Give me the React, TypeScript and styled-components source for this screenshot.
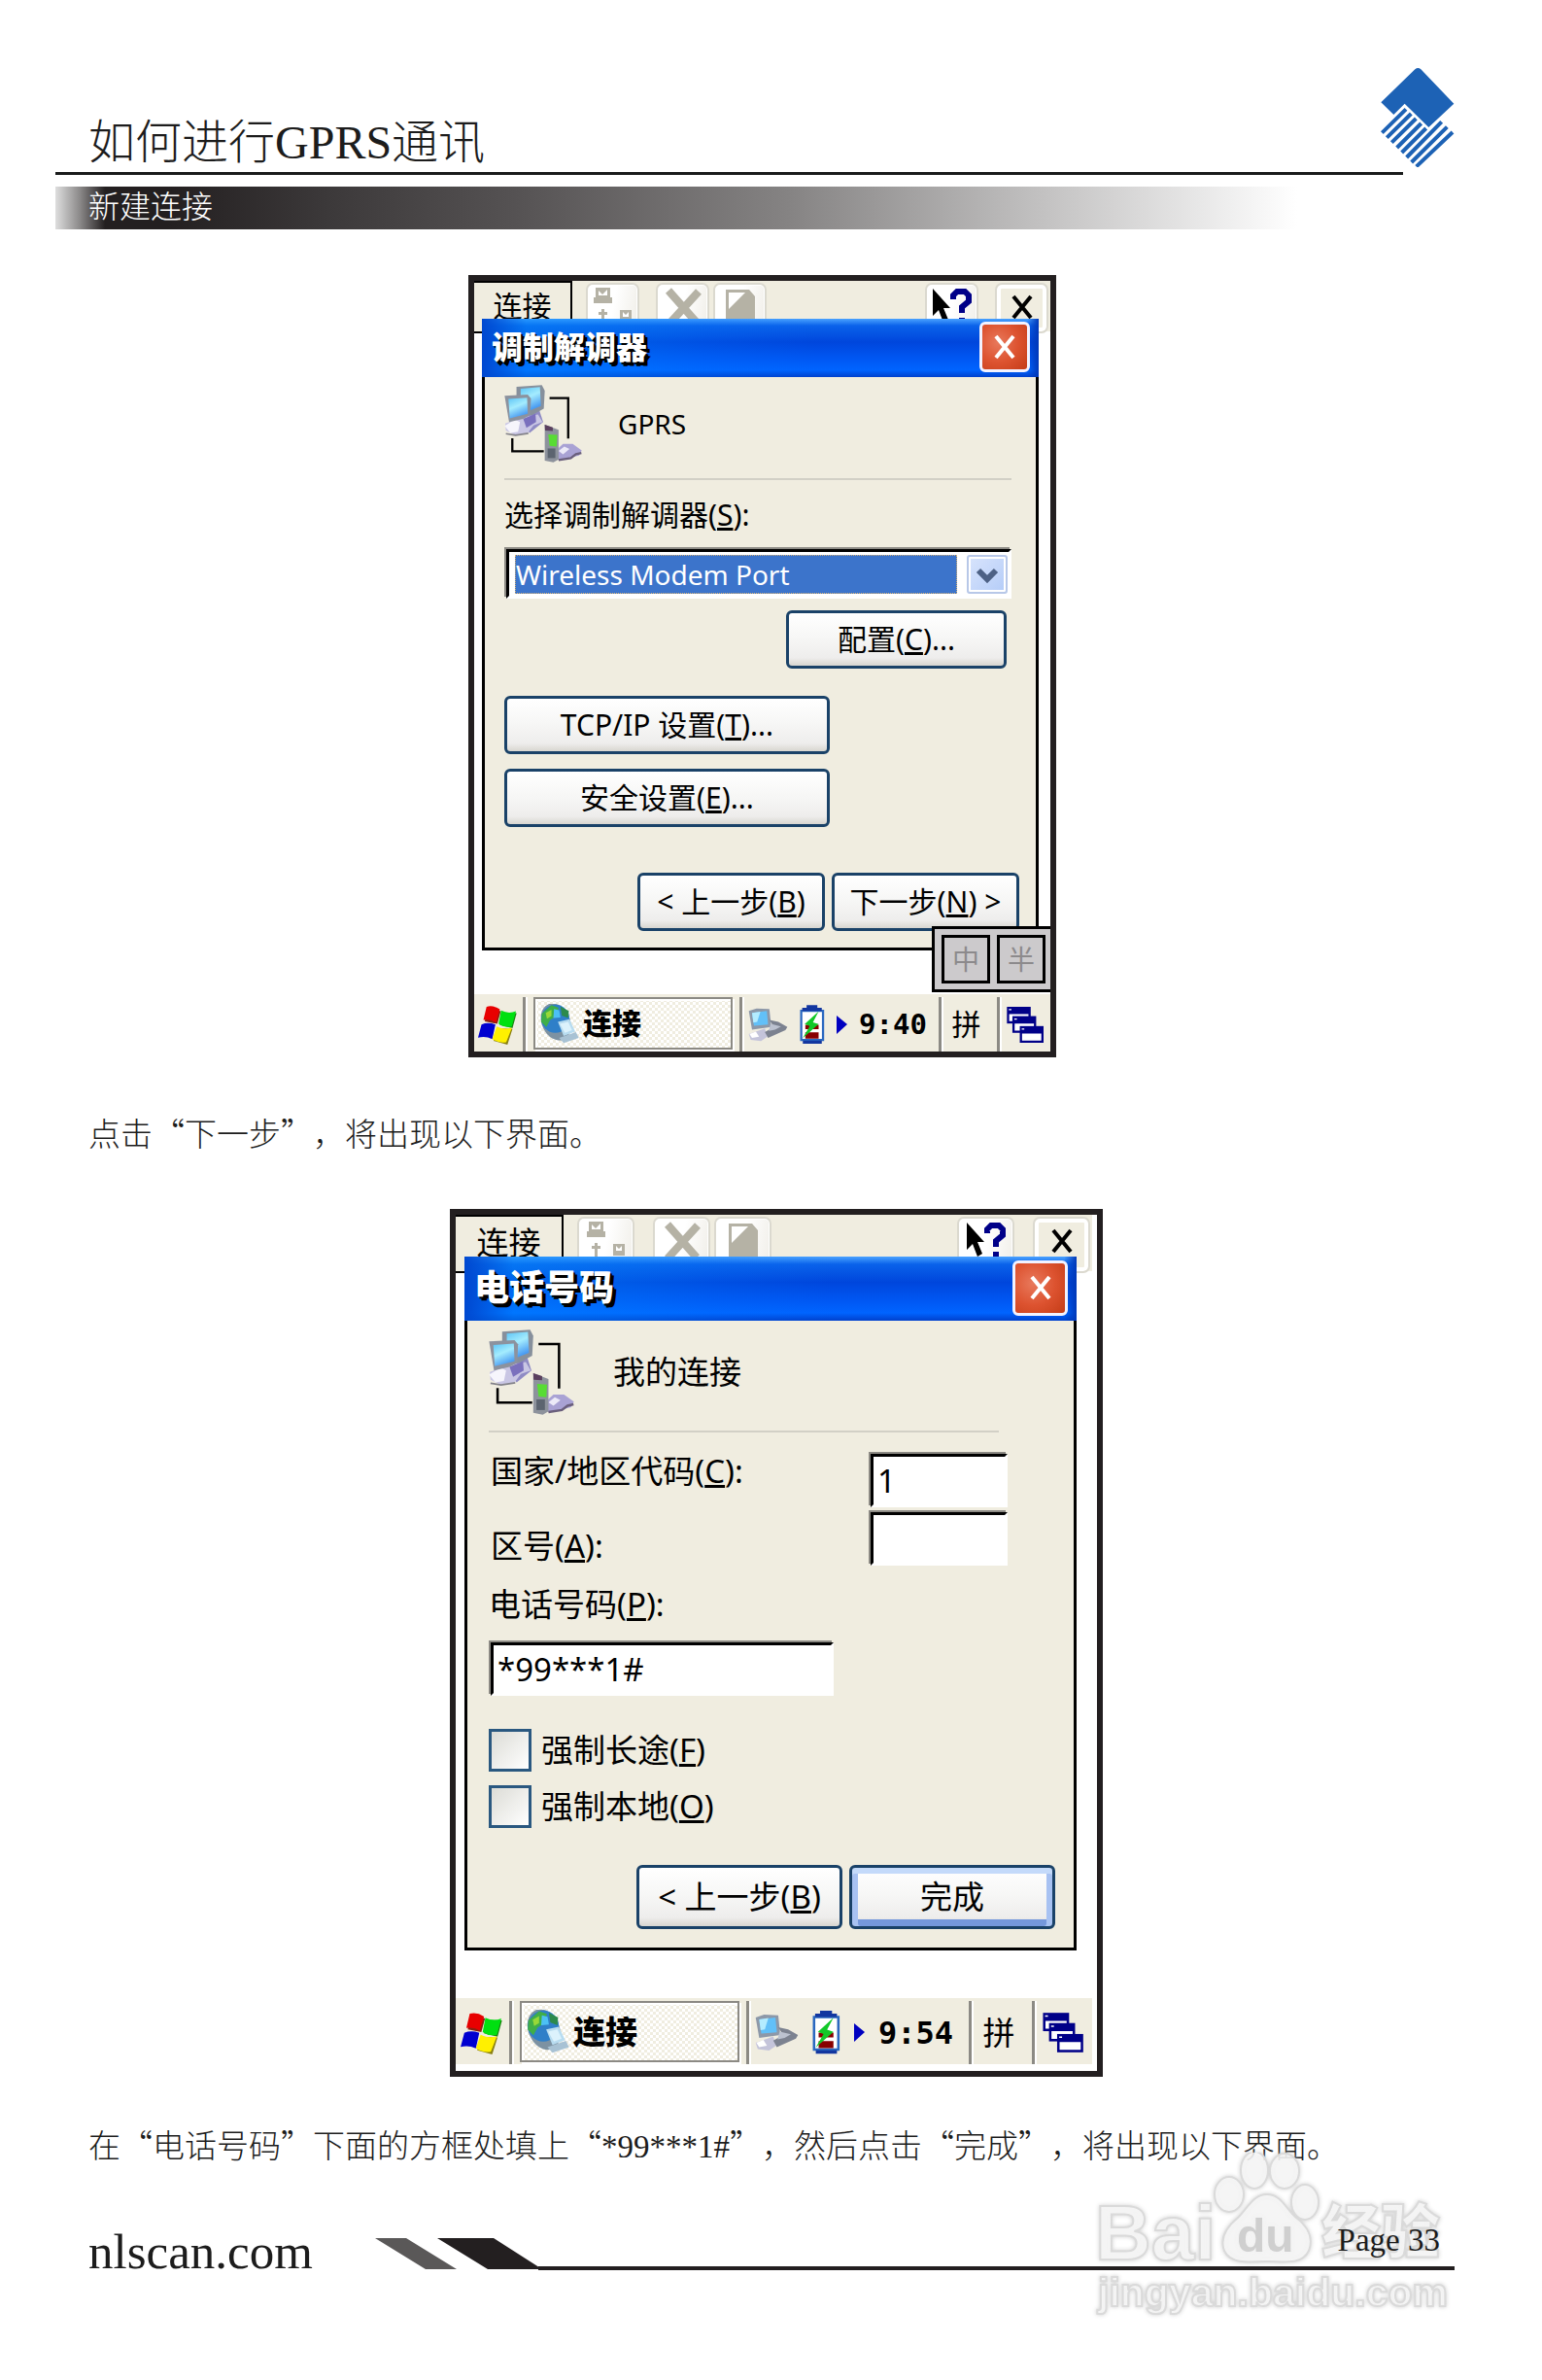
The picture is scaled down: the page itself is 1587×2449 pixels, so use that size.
import React from "react";
import styled, { ThemeProvider, createGlobalStyle, css } from "styled-components";

const serif = `"Liberation Serif", "Noto Sans CJK SC", serif`;
const cjk = `"Noto Sans CJK SC", "Liberation Serif", sans-serif`;
const ui = `"Noto Sans", "Noto Sans CJK SC", sans-serif`;

/* The two device screens share one design at two magnifications. */
const small = {
  width: 605,
  inset: "0",
  toolbar: 54,
  menu: 101,
  tool: 55,
  toolGap: 17,
  overlap: 15,
  dialogMargin: "0 12px 45px 8px",
  title: 60,
  titleText: 32,
  close: 52,
  body: "8px 25px 17px 20px",
  text: 30,
  line: 36,
  icon: 80,
  headGap: 37,
  button: 60,
  navButton: 193,
  bar: 59,
  start: 50,
  task: 205,
  flag: 41,
  glyph: 41,
  battery: 26,
  trayGap: 12,
  clock: 29,
  ime: 60,
  desk: 55,
};

const large: typeof small = {
  width: 672,
  inset: "0 5px 7px 0",
  toolbar: 60,
  menu: 111,
  tool: 59,
  toolGap: 19,
  overlap: 17,
  dialogMargin: "0 16px 49px 9px",
  title: 66,
  titleText: 36,
  close: 57,
  body: "9px 19px 19px 22px",
  text: 33,
  line: 40,
  icon: 88,
  headGap: 40,
  button: 66,
  navButton: 212,
  bar: 68,
  start: 55,
  task: 226,
  flag: 44,
  glyph: 45,
  battery: 29,
  trayGap: 14,
  clock: 32,
  ime: 65,
  desk: 62,
};

type Metrics = typeof small;
type T = { theme: any };
const m = (key: keyof Metrics) => ({ theme }: T) => `${theme[key]}px`;
const raw = (key: keyof Metrics) => ({ theme }: T) => theme[key];

const Global = createGlobalStyle`
  *, *::before, *::after { box-sizing: border-box; }
  body { margin: 0; background: #fff; }
  h1, h2, h3, p { margin: 0; font-weight: inherit; }
  button, input, select { font: inherit; color: inherit; margin: 0; padding: 0; border-radius: 0; }
  svg { display: block; }
`;

/* ---------- page ---------- */

const Page = styled.div`
  min-height: 100vh;
  padding: 70px 90px 102px 57px;
  color: #1c1c1c;
  font-family: ${serif};
`;

const Header = styled.header`
  display: flex;
  align-items: flex-start;
  justify-content: space-between;
  height: 107px;
`;

const Title = styled.h1`
  align-self: flex-end;
  padding-left: 34px;
  font-size: 48px;
  line-height: 60px;
  font-weight: 300;
`;

const Latin = styled.span`
  font-family: ${serif};
  font-weight: 400;
`;

const HeadRule = styled.hr`
  margin: 0 53px 12px 0;
  border: 0;
  height: 3px;
  background: #1a1c1c;
`;

const Band = styled.h2`
  height: 44px;
  margin-right: 162px;
  padding-left: 34px;
  color: #fff;
  font-family: ${cjk};
  font-size: 32px;
  line-height: 36px;
  font-weight: 300;
  background: linear-gradient(90deg, #dedede 0, #8a8888 2%, #231f20 4%, #231f20 9%, #3c393a 22%, #555253 37%, #858383 59%, #c4c3c3 80%, #fff 100%);
`;

const Figure = styled.figure<{ $before: number; $after: number; $top: number }>`
  display: grid;
  grid-template-columns: ${(p) => p.$before}fr auto ${(p) => p.$after}fr;
  margin: ${(p) => p.$top}px 0 0;
  & > * { grid-column: 2; }
`;

const Paragraph = styled.p<{ $top: number }>`
  margin-top: ${(p) => p.$top}px;
  padding-left: 34px;
  font-family: ${cjk};
  font-size: 33px;
  line-height: 44px;
  font-weight: 300;
  text-spacing-trim: space-all;
  font-kerning: none;
`;

const Footer = styled.footer`
  position: relative;
  display: flex;
  align-items: flex-start;
  margin-top: 56px;
  padding-left: 34px;
`;

const SiteLink = styled.a`
  margin-right: 64px;
  color: inherit;
  font-size: 51px;
  line-height: 60px;
  text-decoration: none;
`;

const Slashes = styled.svg`
  width: 172px;
  height: 32px;
  margin-top: 16px;
`;

const PageLine = styled.div`
  position: relative;
  z-index: 1;
  flex: 1;
  height: 49px;
  margin-left: -4px;
  padding-right: 15px;
  border-bottom: 4px solid #231f20;
  font-size: 33px;
  line-height: 37px;
  text-align: right;
`;

const Watermark = styled.svg`
  position: absolute;
  right: 0;
  bottom: -43px;
  width: 377px;
  height: 175px;
  pointer-events: none;
  filter: drop-shadow(0 0 2px #ccc);
`;

/* ---------- device ---------- */

const Device = styled.div`
  position: relative;
  width: ${m("width")};
  padding: ${raw("inset")};
  border: 6px solid #231f20;
  background: #fff;
  color: #000;
  font-family: ${ui};
  font-size: ${m("text")};
  line-height: ${m("line")};
`;

const Toolbar = styled.div`
  display: flex;
  align-items: flex-start;
  height: ${m("toolbar")};
`;

const ToolStrip = styled.div`
  flex: 1;
  display: flex;
  height: 100%;
  padding: 2px 2px 0 14px;
  background: linear-gradient(#f0ede0, #f0ede0) no-repeat 0 0 / 100% calc(100% - 2px);
`;

const Menu = styled.button`
  width: ${m("menu")};
  height: 100%;
  padding-bottom: 3px;
  border: 2px solid #000;
  border-left: 0;
  background: #f0ede0;
`;

const Tool = styled.button<{ $tight?: boolean; $push?: boolean; $plain?: boolean }>`
  display: grid;
  place-items: start center;
  width: ${m("tool")};
  height: 100%;
  margin-right: ${(p) => (p.$tight ? "4px" : `${p.theme.toolGap}px`)};
  padding-top: 3px;
  border: 2px solid #dbd9cf;
  border-radius: 7px;
  background: ${(p) => (p.$plain ? "#f0ede0" : "linear-gradient(100deg, #fff 50%, #f0eee8)")};
  box-shadow: inset 0 0 0 ${(p) => (p.$plain ? 4 : 1)}px #fff;
  ${(p) => p.$push && css`margin-left: auto;`}
  &:last-child { margin-right: 0; }
`;

const ToolIcon = styled.svg`
  width: 42px;
  height: 42px;
`;

const Dialog = styled.form`
  position: relative;
  margin: ${raw("dialogMargin")};
  margin-top: -${m("overlap")};
  border: 3px solid #000;
  border-top: 0;
  background: #f0ede0;
`;

const DialogTitle = styled.div`
  display: flex;
  align-items: center;
  justify-content: space-between;
  height: ${m("title")};
  margin: 0 -3px;
  padding: 0 9px 2px 10px;
  background:
    linear-gradient(90deg, #0048d0 0, rgba(0, 140, 255, 0.45) 8%, rgba(0, 120, 255, 0.2) 40%, transparent 60%, transparent 98%, #0038b8 100%),
    linear-gradient(#4aa2ff 0, #0a62ea 12%, #0046dc 40%, #0058f4 70%, #0064ff 88%, #0040cc 100%);
`;

const DialogName = styled.h3`
  color: #fff;
  font-size: ${m("titleText")};
  font-weight: 900;
  text-shadow: 2px 2px 0 #000, 4px 4px 0 #000;
`;

const Close = styled.button`
  display: grid;
  place-items: center;
  width: ${m("close")};
  height: ${m("close")};
  border: 3px solid #f2f2ff;
  border-radius: 6px;
  background: radial-gradient(circle at 35% 40%, #e8795c 0, #dd5330 50%, #c43c17 100%);
`;

const CloseMark = styled.svg`
  width: 24px;
  height: 26px;
`;

const Body = styled.div`
  display: flex;
  flex-direction: column;
  align-items: flex-start;
  padding: ${raw("body")};
`;

const Head = styled.div<{ $short?: boolean }>`
  display: flex;
  align-items: center;
  align-self: stretch;
  gap: ${m("headGap")};
  margin-right: ${(p) => (p.$short ? 58 : 0)}px;
  padding-bottom: 16px;
  border-bottom: 2px solid #d2d0c6;
  & > svg { width: ${m("icon")}; height: ${m("icon")}; }
`;

const HeadName = styled.span<{ $latin?: boolean }>`
  ${(p) => p.$latin && css`font-size: 28px;`}
`;

const Label = styled.label<{ $top?: number; $end?: boolean }>`
  margin-top: ${(p) => p.$top ?? 0}px;
  ${(p) => p.$end && css`align-self: flex-end;`}
`;

const sunken = css`
  border: 3px solid #fff;
  border-top-color: #000;
  border-left-color: #000;
  outline: 0;
  background: #fff;
  box-shadow: -2px -2px 0 #8c8a84;
`;

const Combo = styled.div`
  ${sunken}
  display: flex;
  align-items: center;
  align-self: stretch;
  height: 51px;
  margin: 17px 0 12px 2px;
  padding: 4px 1px 4px 6px;
`;

const ComboSelect = styled.select`
  appearance: none;
  flex: 1;
  height: 40px;
  border: 1px dotted #d8b070;
  background: #3c74cb;
  color: #fff;
  font-size: 28px;
  line-height: 36px;
`;

const ComboArrow = styled.svg`
  width: 42px;
  height: 40px;
  margin-left: 10px;
  border: 2px solid #b8c8e8;
  border-radius: 3px;
  background: linear-gradient(135deg, #d8e4fc, #b4ccf8);
  box-shadow: inset 0 0 0 2px #fff;
`;

const PushButton = styled.button<{ $width: number; $top?: number; $right?: number; $default?: boolean }>`
  width: ${(p) => p.$width}px;
  height: ${m("button")};
  margin-top: ${(p) => p.$top ?? 0}px;
  ${(p) => p.$right !== undefined && css`align-self: flex-end; margin-right: ${p.$right}px;`}
  border: 3px solid #1a4268;
  border-radius: 6px;
  background: linear-gradient(#fff 0, #f6f6f5 50%, #eeedec 85%, #d8d6d0 100%);
  white-space: nowrap;
  ${(p) => p.$default && css`
    box-shadow: inset 0 6px 0 #c4dafa, inset 6px 0 0 #a8c2f2, inset -6px 0 0 #a8c2f2, inset 0 -7px 0 #7598dc;
  `}
`;

const Nav = styled.div<{ $top: number; $out?: number }>`
  display: flex;
  align-self: flex-end;
  gap: 7px;
  margin: ${(p) => p.$top}px -${(p) => p.$out ?? 0}px 0 0;
`;

const FieldRow = styled.div<{ $top: number }>`
  display: flex;
  align-items: flex-start;
  align-self: stretch;
  justify-content: space-between;
  height: 57px;
  margin: ${(p) => p.$top}px 49px 0 2px;
`;

const TextBox = styled.input<{ $width: number; $top?: number }>`
  ${sunken}
  width: ${(p) => p.$width}px;
  height: 55px;
  margin: ${(p) => p.$top ?? 2}px 0 0 2px;
  padding-left: 4px;
`;

const CheckRow = styled.label<{ $top: number }>`
  display: flex;
  align-items: center;
  gap: 10px;
  margin-top: ${(p) => p.$top}px;
`;

const Check = styled.input`
  appearance: none;
  width: 44px;
  height: 44px;
  border: 3px solid #2a5880;
  background: linear-gradient(135deg, #dcdcd6, #fff);
`;

/* ---------- task bar ---------- */

const Taskbar = styled.div`
  display: flex;
  align-items: stretch;
  height: ${m("bar")};
  padding-top: 3px;
  background: #f0ede0;
`;

const divided = css`
  border-left: 3px solid #8c8a84;
  box-shadow: inset 2px 0 0 #fff;
`;

const Start = styled.button`
  display: grid;
  place-items: center;
  width: ${m("start")};
  padding-right: 3px;
  border: 0;
  background: none;
  & > svg { width: ${m("flag")}; height: ${m("flag")}; }
`;

const TaskCell = styled.div`
  ${divided}
  display: flex;
  padding: 0 7px 2px 8px;
`;

const Task = styled.button`
  display: flex;
  align-items: center;
  gap: 4px;
  width: ${m("task")};
  padding-left: 4px;
  border: 2px solid #8c8a84;
  background: repeating-conic-gradient(#fff 0 25%, #f0ede0 0 50%) 0 0 / 6px 6px;
  box-shadow: inset 2px 2px 0 #fff, 2px 2px 0 #fff;
  font-weight: 900;
  & > svg { width: ${m("glyph")}; height: ${m("glyph")}; }
`;

const Tray = styled.div`
  ${divided}
  flex: 1;
  display: flex;
  align-items: center;
  gap: ${m("trayGap")};
  padding-left: 6px;
`;

const TrayGlyph = styled.svg`
  width: ${m("glyph")};
  height: ${m("glyph")};
`;

const Battery = styled.svg`
  width: ${m("battery")};
  height: ${m("glyph")};
`;

const More = styled.svg`
  width: 11px;
  height: 19px;
`;

const Clock = styled.time`
  font-family: "DejaVu Sans Mono", monospace;
  font-size: ${m("clock")};
  font-weight: 700;
`;

const ImeCell = styled.button`
  ${divided}
  width: ${m("ime")};
  padding-right: 6px;
  border-top: 0;
  border-right: 0;
  border-bottom: 0;
  background: none;
`;

const DeskCell = styled.button`
  ${divided}
  display: grid;
  place-items: center;
  width: ${m("desk")};
  border-top: 0;
  border-right: 0;
  border-bottom: 0;
  background: none;
  & > svg { width: ${m("glyph")}; height: ${m("glyph")}; }
`;

const ImePanel = styled.div`
  position: absolute;
  right: 0;
  bottom: 61px;
  display: flex;
  gap: 7px;
  padding: 6px 5px 6px 7px;
  border: 3px solid #000;
  border-right: 0;
  background: #cccacc;
`;

const ImeKey = styled.button`
  width: 50px;
  height: 50px;
  border: 3px solid #000;
  background: none;
  color: #8c8a8c;
  font-size: 28px;
`;

/* ---------- drawings ---------- */

const Logo = () => (
  <svg width="76" height="102" viewBox="364 60 228 306" aria-label="Newland">
    <path fill="#1d62b5" d="M470 64q9-8 18 0L590 170 512 243 438 170 404 204 365 166Z" />
    <path
      stroke="#1d62b5"
      strokeWidth="12"
      d="M368 260 442 187M383 275 458 201M398 290 473 216M414 306 489 231M429 321 504 246M444 336 552 226M459 351 569 242M474 364 586 258"
    />
  </svg>
);

const ModemIcon = () => (
  <svg viewBox="117 346 242 242" aria-hidden="true">
    <defs>
      <linearGradient id="scr" x1="0" y1="0" x2="0.4" y2="1">
        <stop offset="0" stopColor="#5cc4f6" />
        <stop offset="0.5" stopColor="#a4ecfe" />
        <stop offset="1" stopColor="#4a9cf2" />
      </linearGradient>
    </defs>
    <path d="M258 387h58v126M142 512v41h98" fill="none" stroke="#000" strokeWidth="7" />
    <path d="M160 455 226 425 238 462 196 496Z" fill="#8f8bc4" />
    <path d="M155 352 234 347 243 364 240 420 200 442 155 400Z" fill="#87909c" />
    <path d="M168 358 228 353 231 412 196 426 168 380Z" fill="url(#scr)" />
    <path d="M120 466 178 446 222 438 236 462 208 472 190 496 150 502 122 488Z" fill="#c9c6e4" />
    <path d="M118 474 150 454 166 462 160 492 136 496Z" fill="#f6f5fc" />
    <path d="M176 452 214 436 216 462 186 480Z" fill="#7a70bd" />
    <path d="M122 498 152 503 192 497" stroke="#83828a" strokeWidth="5" fill="none" />
    <path d="M118 380 190 376 200 388 198 440 176 452 132 462Z" fill="#8c929e" />
    <path d="M130 390 188 386 190 436 134 450Z" fill="url(#scr)" />
    <path d="M280 548 300 530 330 530 358 550 350 566 316 574 284 580Z" fill="#a9a2d4" />
    <path d="M286 552 304 538 320 546 300 562Z" fill="#eceaf8" />
    <path d="M286 580 324 574 340 562 357 558" stroke="#6a5f7c" strokeWidth="7" fill="none" />
    <path d="M243 470 286 486 286 578 270 587 243 582Z" fill="#8d929c" />
    <path d="M243 470 268 478 268 490 244 488Z" fill="#5a3f5e" />
    <path d="M254 500 282 502 280 538 258 536Z" fill="#58dc34" />
    <path d="M252 544h24v30h-24z" fill="#5c6470" />
  </svg>
);

const Flag = () => (
  <svg viewBox="30 34 126 126" aria-hidden="true">
    <path fill="#8a2010" d="M66 44 105 54 94 94 54 86Z" />
    <path fill="#e80000" d="M60 40Q80 34 102 48L90 90Q72 78 50 82Z" />
    <path fill="#1a8010" d="M110 58 155 60 142 108 102 98Z" />
    <path fill="#00e010" d="M106 52Q130 64 153 54L140 102Q118 108 98 94Z" />
    <path fill="#0000d0" d="M44 96Q64 88 88 96L78 142Q56 132 33 138Z" />
    <path fill="#8a8010" d="M96 108 142 110 126 160 82 148Z" />
    <path fill="#fff000" d="M92 102Q116 114 140 106L122 152Q100 156 78 142Z" />
  </svg>
);

const Globe = () => (
  <svg viewBox="224 36 124 124" aria-hidden="true">
    <ellipse cx="276" cy="92" rx="44" ry="60" transform="rotate(-24 276 92)" fill="#7d92a2" />
    <ellipse cx="274" cy="82" rx="44" ry="44" fill="#2f7fc8" />
    <path d="M232 66 262 40 284 48 278 74 258 86 246 108 230 92Z" fill="#3fae48" />
    <path d="M290 44 316 58 314 80 294 72Z" fill="#2c8a4c" />
    <path d="M244 64 262 54 262 74 248 82Z" fill="#98d838" />
    <path d="M270 52 286 56 290 78 268 80Z" fill="#4cc0f4" />
    <path d="M282 92 318 84 336 122 300 136Z" fill="#b8dcf0" />
    <path d="M288 98 314 92 326 118 304 126Z" fill="#dcf2fc" />
    <path d="M286 142 338 124 347 142 300 158Z" fill="#a8c2d4" />
  </svg>
);

const Connection = () => (
  <TrayGlyph viewBox="32 48 124 114" aria-hidden="true">
    <path d="M34 62 58 54 98 56 104 112 44 120Z" fill="#8d98a8" />
    <path d="M44 68 90 62 94 104 50 108Z" fill="#62c0f8" />
    <path d="M44 68 70 64 60 96 48 98Z" fill="#b4ecff" />
    <path d="M34 134 84 116 92 142 72 156 40 152Z" fill="#c4c4da" />
    <path d="M36 134 56 126 66 142 44 146Z" fill="#fff" />
    <path d="M98 90 126 96 154 112 148 122 94 146 84 128 112 112Z" fill="#7c8290" />
    <path d="M102 102 134 110 116 120 96 124Z" fill="#bcc2d0" />
  </TrayGlyph>
);

const BatteryIcon = () => (
  <Battery viewBox="190 46 80 124" aria-hidden="true">
    <path d="M195 64h69v92h-69z" fill="#fff" stroke="#2a68c0" strokeWidth="7" />
    <path d="M212 46h34v8h14v10h-62V54h14zM200 158h60v10h-60z" fill="#1236a0" />
    <path d="M208 108h42v14h-42zM208 132h42v20h-42z" fill="#880000" />
    <path d="M250 66 206 106 222 112 200 150 250 106 232 100Z" fill="#12c828" />
  </Battery>
);

const Windows = () => (
  <svg viewBox="824 34 124 124" aria-hidden="true">
    {[[828, 40], [845, 69], [868, 100]].map(([x, y]) => (
      <g key={x}>
        <path d={`M${x} ${y}h74v52h-74z`} fill="#000088" />
        <path d={`M${x + 7} ${y + 23}h60v22h-60zM${x + 6} ${y + 7}h8v4h-8z`} fill="#fff" />
      </g>
    ))}
  </svg>
);

const U = ({ children }: { children: string }) => <>(<u>{children}</u>)</>;

const DeviceToolbar = () => (
  <Toolbar>
    <Menu type="button">连接</Menu>
    <ToolStrip>
      <Tool type="button" disabled aria-label="属性">
        <ToolIcon viewBox="0 0 42 42">
          <path fill="#b5b2a5" d="M3 0h15v10h2v6H1v-6h2zM9 22h3v3h3v3h-3v10H9V28H6v-3h3zM28 23h12v12H28z" />
          <path fill="#fff" d="M6 3l4 4 5-5v6H6zM31 25l3 3 3-3v5h-6z" />
        </ToolIcon>
      </Tool>
      <Tool type="button" disabled $tight aria-label="删除">
        <ToolIcon viewBox="0 0 42 42">
          <path stroke="#b5b2a5" strokeWidth="8" d="M6 3 36 37M37 4 6 38" />
        </ToolIcon>
      </Tool>
      <Tool type="button" disabled aria-label="新建">
        <ToolIcon viewBox="0 0 42 42">
          <path fill="#b5b2a5" d="M6 2h24l6 7v32H6z" />
          <path fill="#fff" d="M9 5h17L9 22z" />
        </ToolIcon>
      </Tool>
      <Tool type="button" $push aria-label="帮助">
        <ToolIcon viewBox="0 0 42 42">
          <path d="M1 1v28l6-6 5 13 5-3-5-12h7z" />
          <path d="M22 12V8l4-4h8l4 4v6l-7 6v6M31 31v6" fill="none" stroke="#000088" strokeWidth="6" />
        </ToolIcon>
      </Tool>
      <Tool type="button" $plain aria-label="关闭">
        <ToolIcon viewBox="0 0 42 42">
          <path d="M12 9 30 31M30 9 12 31" stroke="#000" strokeWidth="4" />
        </ToolIcon>
      </Tool>
    </ToolStrip>
  </Toolbar>
);

const DialogBar = ({ title }: { title: string }) => (
  <DialogTitle>
    <DialogName>{title}</DialogName>
    <Close type="button" aria-label="关闭">
      <CloseMark viewBox="0 0 24 26">
        <path d="M3 2 21 24M21 2 3 24" stroke="#fff" strokeWidth="4" />
      </CloseMark>
    </Close>
  </DialogTitle>
);

const DeviceTaskbar = ({ time }: { time: string }) => (
  <Taskbar>
    <Start type="button" aria-label="开始"><Flag /></Start>
    <TaskCell>
      <Task type="button"><Globe />连接</Task>
    </TaskCell>
    <Tray>
      <Connection />
      <BatteryIcon />
      <More viewBox="0 0 11 19" aria-hidden="true"><path d="M0 0 11 9 0 19Z" fill="#0000c0" /></More>
      <Clock>{time}</Clock>
    </Tray>
    <ImeCell type="button">拼</ImeCell>
    <DeskCell type="button" aria-label="桌面"><Windows /></DeskCell>
  </Taskbar>
);

const ModemScreen = () => (
  <ThemeProvider theme={small}>
    <Device>
      <DeviceToolbar />
      <Dialog>
        <DialogBar title="调制解调器" />
        <Body>
          <Head><ModemIcon /><HeadName $latin>GPRS</HeadName></Head>
          <Label htmlFor="modem" $top={18}>选择调制解调器<U>S</U>:</Label>
          <Combo>
            <ComboSelect id="modem"><option>Wireless Modem Port</option></ComboSelect>
            <ComboArrow viewBox="0 0 38 36" aria-hidden="true">
              <path d="M10 14 19 23 28 14" fill="none" stroke="#4d6185" strokeWidth="6" />
            </ComboArrow>
          </Combo>
          <PushButton type="button" $width={227} $right={5}>配置<U>C</U>...</PushButton>
          <PushButton type="button" $width={335} $top={28}>TCP/IP 设置<U>T</U>...</PushButton>
          <PushButton type="button" $width={335} $top={15}>安全设置<U>E</U>...</PushButton>
          <Nav $top={47} $out={8}>
            <PushButton type="button" $width={small.navButton}>&lt; 上一步<U>B</U></PushButton>
            <PushButton type="button" $width={small.navButton}>下一步<U>N</U> &gt;</PushButton>
          </Nav>
        </Body>
      </Dialog>
      <DeviceTaskbar time="9:40" />
      <ImePanel>
        <ImeKey type="button">中</ImeKey>
        <ImeKey type="button">半</ImeKey>
      </ImePanel>
    </Device>
  </ThemeProvider>
);

const PhoneScreen = () => (
  <ThemeProvider theme={large}>
    <Device>
      <DeviceToolbar />
      <Dialog>
        <DialogBar title="电话号码" />
        <Body>
          <Head $short><ModemIcon /><HeadName>我的连接</HeadName></Head>
          <FieldRow $top={20}>
            <Label htmlFor="country">国家/地区代码<U>C</U>:</Label>
            <TextBox id="country" $width={141} defaultValue="1" />
          </FieldRow>
          <FieldRow $top={3}>
            <Label htmlFor="area" $end>区号<U>A</U>:</Label>
            <TextBox id="area" $width={141} />
          </FieldRow>
          <Label htmlFor="phone" $top={20}>电话号码<U>P</U>:</Label>
          <TextBox id="phone" $width={353} $top={19} defaultValue="*99***1#" />
          <CheckRow $top={34}><Check type="checkbox" /><span>强制长途<U>F</U></span></CheckRow>
          <CheckRow $top={14}><Check type="checkbox" /><span>强制本地<U>O</U></span></CheckRow>
          <Nav $top={38}>
            <PushButton type="button" $width={large.navButton}>&lt; 上一步<U>B</U></PushButton>
            <PushButton type="submit" $width={large.navButton} $default>完成</PushButton>
          </Nav>
        </Body>
      </Dialog>
      <DeviceTaskbar time="9:54" />
    </Device>
  </ThemeProvider>
);

const BaiduMark = () => (
  <Watermark viewBox="1120 2215 377 175" aria-hidden="true">
    <g fill="#fff" fillOpacity="0.7" stroke="#dadada" strokeWidth="2" fontWeight="700">
      <text x="1127" y="2325" fontSize="80" fontFamily="Liberation Sans, sans-serif">Bai</text>
      <ellipse cx="1265" cy="2258" rx="15" ry="18" />
      <ellipse cx="1291" cy="2233" rx="14" ry="19" />
      <ellipse cx="1322" cy="2234" rx="15" ry="18" />
      <ellipse cx="1343" cy="2266" rx="14" ry="18" />
      <path d="M1304 2258C1318 2258 1323 2272 1334 2282C1346 2291 1352 2303 1347 2316C1341 2329 1327 2328 1304 2327C1282 2328 1266 2329 1260 2316C1255 2303 1263 2291 1274 2282C1284 2272 1290 2258 1304 2258Z" />
      <text x="1360" y="2319" fontSize="61" fontWeight="900" fontFamily="Noto Sans CJK SC, sans-serif">经验</text>
      <text x="1130" y="2373" fontSize="41" fontFamily="Liberation Sans, sans-serif">jingyan.baidu.com</text>
    </g>
    <text x="1273" y="2317" fontSize="48" fill="#cfcfcf" fontFamily="Liberation Sans, sans-serif" fontWeight="700">du</text>
  </Watermark>
);

export default function App() {
  return (
    <Page lang="zh-CN">
      <Global />
      <Header>
        <Title>如何进行<Latin>GPRS</Latin>通讯</Title>
        <Logo />
      </Header>
      <HeadRule />
      <Band>新建连接</Band>
      <main>
        <Figure $before={425} $after={410} $top={47}><ModemScreen /></Figure>
        <Paragraph $top={55}>点击“下一步”，将出现以下界面。</Paragraph>
        <Figure $before={406} $after={362} $top={57}><PhoneScreen /></Figure>
        <Paragraph $top={47}>
          在“电话号码”下面的方框处填上“<Latin>*99***1#</Latin>”，然后点击“完成”，将出现以下界面。
        </Paragraph>
      </main>
      <Footer>
        <SiteLink href="http://nlscan.com">nlscan.com</SiteLink>
        <Slashes viewBox="0 0 172 32" aria-hidden="true">
          <path d="M0 0H32L84 32H52Z" fill="#5a5858" />
          <path d="M64 0H122L172 32H116Z" fill="#231f20" />
        </Slashes>
        <PageLine>Page 33</PageLine>
        <BaiduMark />
      </Footer>
    </Page>
  );
}
